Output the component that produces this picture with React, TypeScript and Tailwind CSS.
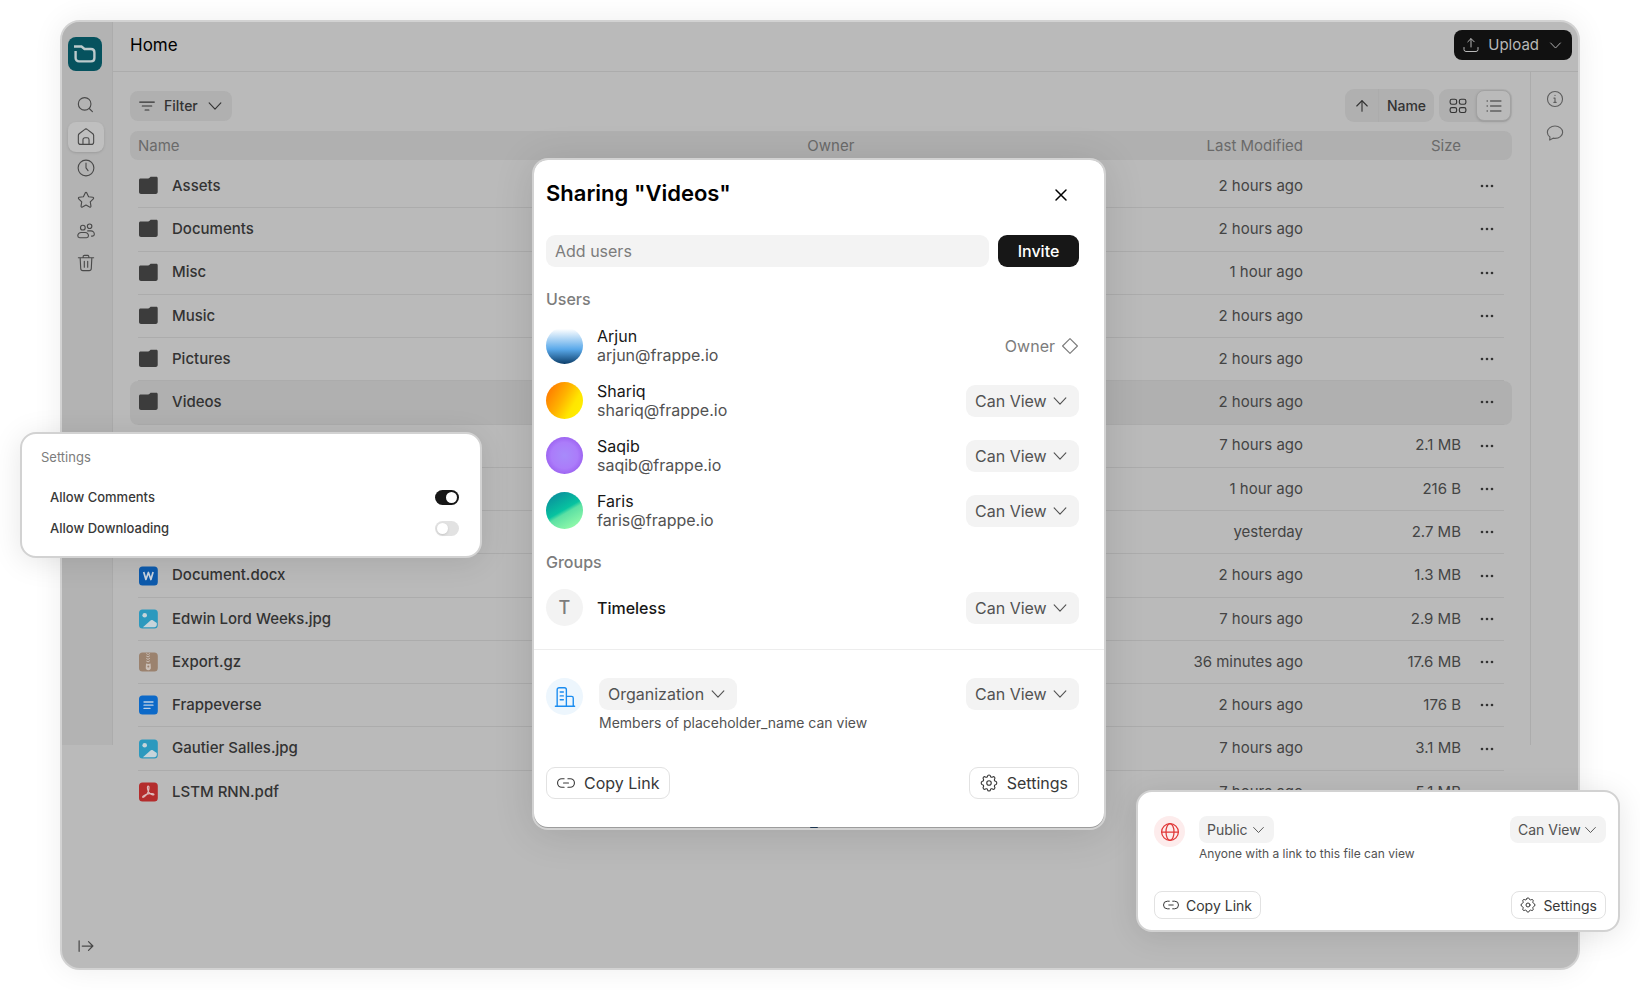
import * as React from 'react';
import { useState } from 'react';
import clsx from 'clsx';
import { ArrowUp } from 'lucide-react';

type FileKind = 'folder' | 'word' | 'image' | 'archive' | 'doc' | 'pdf';

interface FileRow {
  kind?: FileKind;
  name?: string;
  modified: string;
  size?: string;
  selected?: boolean;
}

const files: FileRow[] = [
  { kind: 'folder', name: 'Assets', modified: '2 hours ago' },
  { kind: 'folder', name: 'Documents', modified: '2 hours ago' },
  { kind: 'folder', name: 'Misc', modified: '1 hour ago' },
  { kind: 'folder', name: 'Music', modified: '2 hours ago' },
  { kind: 'folder', name: 'Pictures', modified: '2 hours ago' },
  { kind: 'folder', name: 'Videos', modified: '2 hours ago', selected: true },
  { modified: '7 hours ago', size: '2.1 MB' },
  { modified: '1 hour ago', size: '216 B' },
  { modified: 'yesterday', size: '2.7 MB' },
  { kind: 'word', name: 'Document.docx', modified: '2 hours ago', size: '1.3 MB' },
  { kind: 'image', name: 'Edwin Lord Weeks.jpg', modified: '7 hours ago', size: '2.9 MB' },
  { kind: 'archive', name: 'Export.gz', modified: '36 minutes ago', size: '17.6 MB' },
  { kind: 'doc', name: 'Frappeverse', modified: '2 hours ago', size: '176 B' },
  { kind: 'image', name: 'Gautier Salles.jpg', modified: '7 hours ago', size: '3.1 MB' },
  { kind: 'pdf', name: 'LSTM RNN.pdf', modified: '7 hours ago', size: '5.1 MB' },
];

const users = [
  { name: 'Arjun', email: 'arjun@frappe.io', owner: true, avatar: 'bg-[linear-gradient(180deg,#ffffff_5%,#5aa9ea_60%,#0d3f6b_100%)]' },
  { name: 'Shariq', email: 'shariq@frappe.io', owner: false, avatar: 'bg-[linear-gradient(120deg,#ff7a00_10%,#ffb300_45%,#ffe600_70%,#fff200_100%)]' },
  { name: 'Saqib', email: 'saqib@frappe.io', owner: false, avatar: 'bg-[radial-gradient(circle,#a78bfa_0%,#ab7cfa_50%,#8b45e6_100%)]' },
  { name: 'Faris', email: 'faris@frappe.io', owner: false, avatar: 'bg-[linear-gradient(150deg,#0a8f9c_10%,#07c3a0_48%,#5ce0a4_56%,#9dffab_95%)]' },
];

function Icon({ className = 'size-[18px]', children }: { className?: string; children: React.ReactNode }) {
  return (
    <svg viewBox="0 0 16 16" fill="none" stroke="currentColor" strokeLinecap="round" strokeLinejoin="round" className={clsx('shrink-0', className)}>
      {children}
    </svg>
  );
}

function Chevron({ className }: { className?: string }) {
  return (
    <Icon className={className}>
      <path d="M2.800 5.300L8 10.700l5.200-5.400" />
    </Icon>
  );
}

const navItems = [
  { label: 'Search', icon: <><circle cx="6.800" cy="7" r="5.600" /><path d="M10.900 11.100l2.800 2.800" /></> },
  { label: 'Home', active: true, icon: <><path d="M1.200 6.600c0-.6.300-1.100.7-1.500L6.700 1.400a2 2 0 0 1 2.600 0l4.800 3.700c.4.400.7.900.7 1.500v6a2 2 0 0 1-2 2H3.200a2 2 0 0 1-2-2z" /><path d="M5.300 14.400v-4a1.700 1.700 0 0 1 1.700-1.700h2a1.700 1.700 0 0 1 1.700 1.700v4" /></> },
  { label: 'Recents', icon: <><circle cx="8" cy="8" r="7" /><path d="M8 3.700v4.200l1.800 2.500" /></> },
  { label: 'Favourites', icon: <path d="M8 1.200c.3 0 .5.200.7.500l1.600 3.400 3.700.5c.8.100 1 .9.500 1.400l-2.700 2.600.6 3.800c.1.700-.6 1.200-1.200.9L8 12.500l-3.200 1.800c-.6.300-1.300-.2-1.200-.9l.6-3.800L1.500 7c-.5-.5-.3-1.300.5-1.400l3.700-.5 1.600-3.400c.2-.3.4-.5.7-.5z" /> },
  { label: 'Shared', icon: <><circle cx="5.200" cy="5" r="2.100" /><circle cx="11.200" cy="3.800" r="2" /><path d="M3.800 9.300h3.400a3 3 0 0 1 3 3c0 .9-.7 1.700-1.700 1.700H2.400c-1 0-1.700-.8-1.700-1.700a3 3 0 0 1 3.100-3zM9.500 7.900h2.900a3 3 0 0 1 3 3c0 .9-.8 1.600-1.700 1.600h-.8" /></> },
  { label: 'Trash', icon: <><path d="M1.200 3.300h13.600M5.500 3.300V2.200c0-.6.400-1 1-1h3c.6 0 1 .4 1 1v1.100M2.800 3.300l.5 9.600a2 2 0 0 0 2 1.900h5.400a2 2 0 0 0 2-1.900l.5-9.600M6.500 6.500v5.200M9.500 6.500v5.200" /></> },
];

function FileIcon({ kind }: { kind: FileKind }) {
  return (
    <svg viewBox="0 0 20 20" className="size-5 shrink-0" fill="none">
      {kind === 'folder' && (
        <path d="M2.600 2.500h7.600c.5 0 .8-.2 1.100-.5l.8-.8c.3-.3.600-.4 1-.4h5.200c.8 0 1.400.6 1.400 1.400V16c0 1.100-.9 2-2 2H3c-1.100 0-2-.9-2-2V4c0-.9.700-1.500 1.600-1.500z" fill="#3c3c3c" />
      )}
      {kind === 'word' && (
        <>
          <rect x="1" y=".6" width="18.800" height="18.800" rx="3.500" fill="#0d5aac" />
          <path d="M5.700 6l2.200 7.500 2.500-7 2.500 7 2.200-7.500" stroke="#c9d3de" strokeWidth="1.700" strokeLinejoin="round" />
        </>
      )}
      {kind === 'image' && (
        <>
          <rect x="1" y=".6" width="18.800" height="18.800" rx="3.500" fill="#2c99be" />
          <circle cx="6.700" cy="6.200" r="2.300" fill="#c6d4da" />
          <path d="M4.900 18.200l7.900-6.900a1.400 1.400 0 0 1 1.600-.2l4.400 3v1.600c0 1.400-1.100 2.500-2.500 2.500z" fill="#c6d4da" />
        </>
      )}
      {kind === 'archive' && (
        <>
          <rect x="1" y=".6" width="18.800" height="18.800" rx="3.500" fill="#9b826e" />
          <path d="M8.300 1.500l1.500 1M11.800 1.500l-1.500 1M8.300 4l2 1M11.900 3.700l-1.700 1M8.300 6.500l2 1M11.900 6.200l-1.700 1M8.300 9l2 1M11.900 8.700l-1.700 1" stroke="#cbc0b8" />
          <path d="M8 11.500l2.300.5 2.300-.5.200 3.500a2.600 2.600 0 1 1-5 0z" fill="#cbc0b8" />
          <circle cx="10.300" cy="14.600" r="1" fill="#9b826e" />
        </>
      )}
      {kind === 'doc' && (
        <>
          <rect x="1" y=".6" width="18.800" height="18.800" rx="3.500" fill="#0c69c8" />
          <path d="M6 7h9M6 10.200h9M6 13.400h6" stroke="#bdcfe3" strokeWidth="1.300" strokeLinecap="round" />
        </>
      )}
      {kind === 'pdf' && (
        <>
          <rect x="1" y=".6" width="18.800" height="18.800" rx="3.500" fill="#b42c2c" />
          <path d="M10.200 4.100c1.200 0 .9 2.600.1 5.400-1 2.700-3.800 5.900-5.300 5.800-1.200-.2.800-2.400 5-3.400 3.300-.7 6-.5 6 .5-.1 1.200-3.300.3-5.300-2.300C9.300 8 9 4.100 10.200 4.100z" stroke="#dcb9b9" strokeWidth="1.200" />
        </>
      )}
    </svg>
  );
}

function LinkIcon({ className }: { className?: string }) {
  return (
    <Icon className={className}>
      <path d="M6.300 4.200H4.300a3.800 3.800 0 0 0 0 7.600h2M9.700 4.200h2a3.800 3.800 0 0 1 0 7.600h-2M5.800 8h4.400" />
    </Icon>
  );
}

function GearIcon({ className }: { className?: string }) {
  return (
    <Icon className={className}>
      <circle cx="8" cy="8" r="2" />
      <path d="M6.700 1.900c.2-1.400 2.400-1.400 2.600 0 .1.900 1.100 1.300 1.900.8 1.100-.9 2.700.7 1.800 1.800-.5.800-.1 1.800.8 1.900 1.500.3 1.500 2.900 0 3.200-.9.100-1.300 1.100-.8 1.900.9 1.100-.7 2.700-1.800 1.800-.8-.5-1.800-.1-1.900.8-.2 1.400-2.400 1.400-2.600 0-.1-.9-1.100-1.300-1.900-.8-1.100.9-2.700-.7-1.800-1.800.5-.8.100-1.800-.8-1.900-1.500-.3-1.500-2.900 0-3.200.9-.1 1.300-1.100.8-1.900-.9-1.100.7-2.700 1.800-1.800.8.500 1.800.1 1.900-.8z" />
    </Icon>
  );
}

function Dropdown({ label, value, small, className }: { label: string; value: string; small?: boolean; className: string }) {
  return (
    <div className={clsx('relative shrink-0 text-[#525252]', className)}>
      <select
        aria-label={label}
        className={clsx(
          'w-full appearance-none bg-[#f3f3f3] outline-none',
          small ? 'h-[27px] rounded-lg pl-2 text-[14px]' : 'h-8 rounded-[9px] pl-[9px] text-[16px]'
        )}
      >
        <option>{value}</option>
      </select>
      <Chevron className={clsx('pointer-events-none absolute top-1/2 -translate-y-1/2', small ? 'right-2 size-[15px]' : 'right-2.5 size-[18px]')} />
    </div>
  );
}

function Toggle({ label, defaultOn }: { label: string; defaultOn?: boolean }) {
  const [on, setOn] = useState(!!defaultOn);
  return (
    <label className="flex h-[31px] items-center justify-between">
      {label}
      <span className="relative flex">
        <input
          type="checkbox"
          role="switch"
          checked={on}
          onChange={() => setOn(!on)}
          className="h-[15px] w-6 appearance-none rounded-full bg-[#e2e2e2] checked:bg-[#171717]"
        />
        <span className={clsx('pointer-events-none absolute top-0.5 size-[11px] rounded-full bg-white shadow-sm', on ? 'right-0.5' : 'left-0.5')} />
      </span>
    </label>
  );
}

function Sidebar() {
  return (
    <aside className="flex w-[51px] shrink-0 flex-col justify-between pb-3 text-[#4a4a4a]">
      <div className="h-[723px] border-r border-[#acacac] bg-[#b3b3b3] pt-[15px]">
        <svg viewBox="0 0 34 34" className="ml-1.5 size-[34px]">
          <rect width="34" height="34" rx="8" fill="#06525e" />
          <path d="M6 9.500h7.500l3 2.500h6.500c2 0 3.400 1.400 3.400 3.400V21c0 2-1.400 3.400-3.400 3.400H11c-2 0-3.400-1.400-3.400-3.400v-7" fill="none" stroke="#bccacc" strokeWidth="2.400" />
        </svg>
        <nav className="mt-[19px] flex h-[188px] flex-col justify-between pr-2 pl-1.5">
          {navItems.map((item) => (
            <button
              key={item.label}
              aria-label={item.label}
              className={clsx('flex h-[30px] items-center justify-center rounded-lg', item.active && 'bg-[#bfbfbf] shadow-sm')}
            >
              <Icon>{item.icon}</Icon>
            </button>
          ))}
        </nav>
      </div>
      <button aria-label="Expand sidebar" className="ml-[14px]">
        <Icon className="size-5">
          <path d="M2.500 3.800v8.400M5 8h8.500M10 4.500L13.500 8 10 11.500" />
        </Icon>
      </button>
    </aside>
  );
}

function FileTable() {
  return (
    <table className="mx-2 mt-[9px] h-[683px] w-[calc(100%-16px)] table-fixed border-separate border-spacing-0 text-[15px] text-[#444]">
      <thead>
        {/* the rounded bar is painted by the first cell but sized by the row */}
        <tr className="relative h-[34px] text-[#6a6a6a]">
          <th className="w-[49%] pb-1 text-left font-normal before:absolute before:-inset-x-2 before:top-0 before:-z-10 before:h-[29px] before:rounded-lg before:bg-[#b0b0b0]">Name</th>
          <th className="pb-1 text-left font-normal">Owner</th>
          <th className="w-[200px] pb-1 text-right font-normal">Last Modified</th>
          <th className="w-[158px] pb-1 text-right font-normal">Size</th>
          <th className="w-[43px]" aria-label="Actions" />
        </tr>
      </thead>
      <tbody>
        {files.map((file, i) => (
          <tr key={i} className="relative [&>td]:border-b [&>td]:border-[#acacac] last:[&>td]:border-transparent">
            <td
              className={clsx(
                'font-[450] text-[#333]',
                file.selected && 'before:absolute before:-inset-x-2 before:inset-y-0 before:-z-10 before:rounded-lg before:bg-[#b0b0b0]'
              )}
            >
              {file.kind && (
                <div className="flex items-center gap-[14px]">
                  <FileIcon kind={file.kind} />
                  {file.name}
                </div>
              )}
            </td>
            <td />
            <td className="text-right">{file.modified}</td>
            <td className="text-right">{file.size}</td>
            <td className="pl-[19px] text-[#333]">
              <button aria-label="More" className="block">
                <svg viewBox="0 0 14 4" className="h-1 w-[14px]" fill="currentColor">
                  <circle cx="2" cy="2" r="1.300" />
                  <circle cx="7" cy="2" r="1.300" />
                  <circle cx="12" cy="2" r="1.300" />
                </svg>
              </button>
            </td>
          </tr>
        ))}
      </tbody>
    </table>
  );
}

function DriveWindow() {
  return (
    <div className="isolate flex min-h-[calc(100vh-40px)] overflow-hidden rounded-[20px] border-2 border-[#d2d2d2] bg-[#bababa] shadow-[0_0_30px_rgba(0,0,0,0.07)]">
      <Sidebar />
      <div className="min-w-0 flex-1">
        <header className="flex h-[50px] items-center justify-between border-b border-[#acacac] pr-1.5 pb-[3px] pl-[17px]">
          <h1 className="pt-0.5 text-[17px] text-black">Home</h1>
          <button className="flex h-[30px] items-center gap-[9px] rounded-lg bg-[#111] px-[9px] text-[15px] text-[#b8b8b8]">
            <Icon className="size-4">
              <path d="M8 10V1.800M4.800 4.800L8 1.600l3.200 3.200M1 10.500v2a2 2 0 0 0 2 2h10a2 2 0 0 0 2-2v-2" />
            </Icon>
            Upload
            <Chevron className="size-[15px]" />
          </button>
        </header>
        <div className="flex">
          <main className="min-w-0 flex-1 pt-[17px] pr-[18px] pl-[17px]">
            <div className="flex items-center justify-between text-[14px] font-[450] text-[#333]">
              <button className="flex h-[30px] items-center gap-2 rounded-lg bg-[#b0b0b0] px-2">
                <Icon>
                  <path d="M1.500 4.500h13M3.800 8h8.400M6.300 11.500h3.400" />
                </Icon>
                Filter
                <Chevron />
              </button>
              <div className="flex gap-[5px]">
                <div className="flex h-[33px] rounded-[9px] bg-[#b0b0b0]">
                  <button aria-label="Sort ascending" className="flex w-[34px] items-center justify-center border-r border-[#acacac]">
                    <ArrowUp strokeWidth={1.5} className="size-[18px]" />
                  </button>
                  <button className="w-[55px]">Name</button>
                </div>
                <div className="flex h-[33px] rounded-[9px] bg-[#b0b0b0] p-px">
                  <button aria-label="Grid view" className="flex w-9 items-center justify-center">
                    <Icon>
                      <rect x="1" y="2" width="5.800" height="4.400" rx="1.500" />
                      <rect x="9.200" y="2" width="5.800" height="4.400" rx="1.500" />
                      <rect x="1" y="9.400" width="5.800" height="4.400" rx="1.500" />
                      <rect x="9.200" y="9.400" width="5.800" height="4.400" rx="1.500" />
                    </Icon>
                  </button>
                  <button aria-label="List view" className="flex w-[35px] items-center justify-center rounded-lg border border-[#a2a2a2] bg-[#bababa] shadow-sm">
                    <Icon className="size-4">
                      <path d="M4.500 3h10.500M4.500 8h10.500M4.500 13h10.500M1 3h.5M1 8h.5M1 13h.5" />
                    </Icon>
                  </button>
                </div>
              </div>
            </div>
            <FileTable />
          </main>
          <div className="flex h-[673px] w-12 shrink-0 flex-col items-center gap-4 border-l border-[#acacac] pt-[18px] text-[#5e5e5e]">
            <button aria-label="Details">
              <Icon>
                <circle cx="8" cy="8" r="6.700" />
                <path d="M8 7.200v3.800M7 7.200h1M7 11h2M8 4.800v.1" />
              </Icon>
            </button>
            <button aria-label="Comments">
              <Icon>
                <path d="M8 1.800c3.800 0 6.800 2.500 6.800 5.500s-3 5.500-6.800 5.500c-.6 0-1.200-.1-1.700-.2l-3 1.700.2-2.800C2.100 10.500 1.200 9 1.200 7.300c0-3 3-5.500 6.800-5.500z" />
              </Icon>
            </button>
          </div>
        </div>
      </div>
    </div>
  );
}

function ShareDialog() {
  return (
    <div role="dialog" aria-label="Sharing" className="relative w-[574px] rounded-[16px] border-2 border-[#d2d2d2] bg-[#9c9c9c] text-[16px] leading-5 shadow-[0_4px_40px_rgba(0,0,0,0.12)]">
      <div className="mb-px rounded-[14px] bg-white pt-[17px] pb-7">
        <div className="pr-[25px] pl-3">
          <div className="flex items-start justify-between">
            <h2 className="text-[22px] leading-8 font-semibold text-black">Sharing "Videos"</h2>
            <button aria-label="Close" className="p-2.5 text-black">
              <svg viewBox="0 0 16 16" className="size-4" stroke="currentColor" strokeWidth="1.500" strokeLinecap="round">
                <path d="M3 3l10 10M13 3L3 13" />
              </svg>
            </button>
          </div>
          <form className="mt-[22px] flex gap-[9px]" onSubmit={(e) => e.preventDefault()}>
            <input
              aria-label="Add users"
              placeholder="Add users"
              className="h-8 min-w-0 flex-1 rounded-[9px] bg-[#f3f3f3] px-[9px] outline-none placeholder:text-[#7c7c7c]"
            />
            <button className="h-8 w-[81px] rounded-[9px] bg-[#171717] font-[450] text-white">Invite</button>
          </form>

          <h3 className="mt-[22px] font-[450] text-[#7c7c7c]">Users</h3>
          <ul className="mt-[18px] flex flex-col gap-[18px]">
            {users.map((user) => (
              <li key={user.email} className="flex h-[37px] items-center">
                <span className={clsx('size-[37px] rounded-full', user.avatar)} />
                <div className="ml-[14px] flex-1 leading-[19px]">
                  <p className="text-[#171717]">{user.name}</p>
                  <p className="text-[#525252]">{user.email}</p>
                </div>
                {user.owner ? (
                  <span className="flex items-center gap-1.5 text-[#7c7c7c]">
                    Owner
                    <Icon>
                      <path d="M8 1.400L14.600 8 8 14.600 1.400 8z" />
                    </Icon>
                  </span>
                ) : (
                  <Dropdown label={`Access for ${user.name}`} value="Can View" className="w-[113px]" />
                )}
              </li>
            ))}
          </ul>

          <h3 className="mt-[23px] font-[450] text-[#7c7c7c]">Groups</h3>
          <div className="mt-[17px] flex h-[37px] items-center">
            <span className="flex size-[37px] items-center justify-center rounded-full bg-[#f3f3f3] text-[18px] font-medium text-[#7c7c7c]">T</span>
            <p className="ml-[14px] flex-1 font-[450] text-[#171717]">Timeless</p>
            <Dropdown label="Access for Timeless" value="Can View" className="w-[113px]" />
          </div>
        </div>

        <div className="mt-[23px] border-t border-[#ededed] pt-7 pr-[25px] pl-3">
          <div className="flex items-start">
            <span className="flex size-[37px] items-center justify-center rounded-full bg-[#edf6fd] text-[#1a8cf0]">
              <Icon className="size-[22px]">
                <path d="M1 14.700h14M2.300 14.500V2.700a1.400 1.400 0 0 1 1.400-1.400h3.900A1.400 1.400 0 0 1 9 2.700v11.800M9 7.500h3.800a1.200 1.200 0 0 1 1.200 1.200v5.800M4.500 4.400h2.300M4.500 7.200h2.300M4.500 10h2.300" />
              </Icon>
            </span>
            <div className="ml-4 flex-1">
              <Dropdown label="General access" value="Organization" className="w-[138px]" />
              <p className="mt-[3px] text-[14px] text-[#525252]">Members of placeholder_name can view</p>
            </div>
            <Dropdown label="General access level" value="Can View" className="w-[113px]" />
          </div>
          <div className="mt-[34px] flex justify-between text-[#383838]">
            <button className="flex h-8 items-center gap-[9px] rounded-[9px] border border-[#e2e2e2] px-2.5">
              <LinkIcon />
              Copy Link
            </button>
            <button className="flex h-8 items-center gap-[9px] rounded-[9px] border border-[#e2e2e2] px-2.5">
              <GearIcon />
              Settings
            </button>
          </div>
        </div>
      </div>
      <span className="absolute bottom-0 left-[48.5%] h-px w-2 rounded-t-full bg-[#1b3550]" />
    </div>
  );
}

function SettingsCard() {
  return (
    <section className="w-[462px] rounded-[16px] border-2 border-[#d2d2d2] bg-white pt-3.5 pr-[21px] pb-3 pl-[19px] text-[13px] font-[450] text-[#383838] shadow-[0_4px_30px_rgba(0,0,0,0.1)]">
      <h3 className="mb-4 leading-[18px] font-normal text-[#7c7c7c]">Settings</h3>
      <div className="pl-[9px]">
        <Toggle label="Allow Comments" defaultOn />
        <Toggle label="Allow Downloading" />
      </div>
    </section>
  );
}

function PublicLinkCard() {
  return (
    <section className="w-[484px] rounded-[16px] border-2 border-[#d2d2d2] bg-white pt-6 pr-3 pb-[11px] pl-4 text-[14px] shadow-[0_4px_30px_rgba(0,0,0,0.1)]">
      <div className="flex items-start">
        <span className="flex size-[31px] items-center justify-center rounded-full bg-[#fdecec] text-[#e03636]">
          <Icon className="size-5">
            <circle cx="8" cy="8" r="6.700" />
            <ellipse cx="8" cy="8" rx="3.200" ry="6.700" />
            <path d="M1.300 8h13.400" />
          </Icon>
        </span>
        <div className="ml-[14px] flex-1">
          <Dropdown small label="Link access" value="Public" className="w-[75px]" />
          <p className="mt-0.5 text-[12px] leading-[18px] text-[#525252]">Anyone with a link to this file can view</p>
        </div>
        <Dropdown small label="Link access level" value="Can View" className="w-24" />
      </div>
      <div className="mt-7 flex justify-between text-[#383838]">
        <button className="flex h-7 items-center gap-[7px] rounded-lg border border-[#e2e2e2] px-2">
          <LinkIcon className="size-4" />
          Copy Link
        </button>
        <button className="flex h-7 items-center gap-[7px] rounded-lg border border-[#e2e2e2] px-2">
          <GearIcon className="size-4" />
          Settings
        </button>
      </div>
    </section>
  );
}

export default function App() {
  return (
    <div className="relative min-h-screen overflow-hidden bg-white px-[60px] py-5 font-['Inter',sans-serif]">
      <DriveWindow />
      <div className="absolute inset-x-0 top-[158px] flex justify-center pr-0.5">
        <ShareDialog />
      </div>
      <div className="absolute top-[432px] left-5">
        <SettingsCard />
      </div>
      <div className="absolute top-[790px] right-5">
        <PublicLinkCard />
      </div>
    </div>
  );
}
